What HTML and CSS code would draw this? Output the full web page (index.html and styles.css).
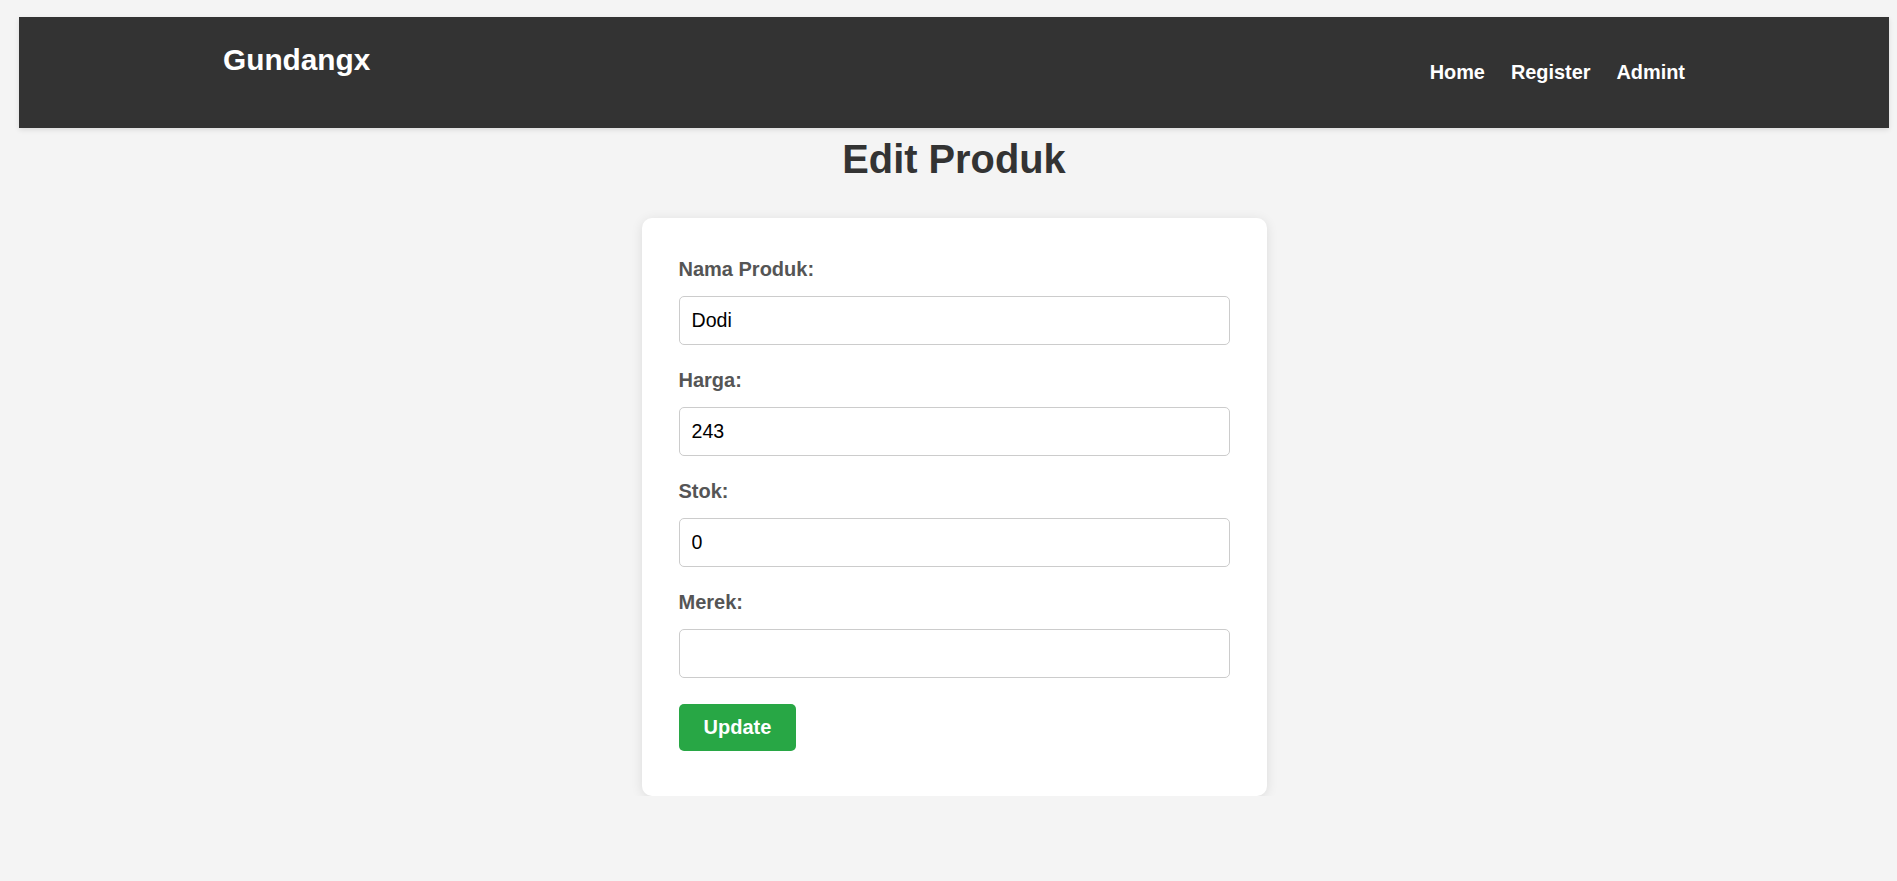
FILE: index.html
```html
<!DOCTYPE html>
<html lang="id">
<head>
<meta charset="utf-8">
<title>Edit Produk</title>
<link rel="stylesheet" href="styles.css">
</head>
<body>
<div class="page">
  <header class="site-header">
    <div class="brand">Gundangx</div>
    <nav class="nav">
      <a href="#" class="nav-link">Home</a>
      <a href="#" class="nav-link">Register</a>
      <a href="#" class="nav-link">Admint</a>
    </nav>
  </header>
  <h1 class="title">Edit Produk</h1>
  <form class="card">
    <label class="label">Nama Produk:</label>
    <input class="input" type="text" value="Dodi">
    <label class="label">Harga:</label>
    <input class="input" type="text" value="243">
    <label class="label">Stok:</label>
    <input class="input" type="text" value="0">
    <label class="label">Merek:</label>
    <input class="input" type="text" value="">
    <button class="btn" type="button">Update</button>
  </form>
</div>
</body>
</html>
```
FILE: styles.css
```css
* { box-sizing: border-box; }
html, body {
  margin: 0;
  padding: 0;
  background: #f4f4f4;
  font-family: "Liberation Sans", Arial, sans-serif;
}
.page {
  padding: 17px 8px 0 19px;
  display: flex;
  flex-direction: column;
  align-items: center;
}
.site-header {
  align-self: stretch;
  height: 111px;
  background: #333333;
  box-shadow: 0 2px 5px rgba(0,0,0,0.1);
  display: flex;
  justify-content: space-between;
  align-items: center;
  padding: 0 204px;
}
.brand {
  align-self: flex-start;
  margin-top: 26px;
  color: #ffffff;
  font-weight: bold;
  font-size: 29.8px;
  line-height: 1.15;
}
.nav {
  display: flex;
  gap: 26px;
}
.nav-link {
  color: #ffffff;
  text-decoration: none;
  font-weight: bold;
  font-size: 19.9px;
  line-height: 1.15;
}
.title {
  margin: 9px 0 0;
  color: #333333;
  font-size: 39.8px;
  font-weight: bold;
  line-height: 1.15;
}
.card {
  margin-top: 35px;
  width: 625px;
  background: #ffffff;
  border-radius: 10px;
  box-shadow: 0 2px 12px rgba(0,0,0,0.1);
  padding: 40px 37px 45px;
  display: flex;
  flex-direction: column;
  align-items: flex-start;
}
.label {
  display: block;
  color: #555555;
  font-weight: bold;
  font-size: 20px;
  line-height: 23px;
  margin-bottom: 15px;
}
.input {
  display: block;
  width: 100%;
  height: 49px;
  margin: 0 0 24px;
  padding: 0 12px;
  border: 1px solid #cccccc;
  border-radius: 5px;
  font-family: "Liberation Sans", Arial, sans-serif;
  font-size: 19.6px;
  color: #000000;
  background: #ffffff;
}
.input:last-of-type { margin-bottom: 26px; }
.btn {
  height: 47px;
  padding: 0 25px;
  background: #28a745;
  color: #ffffff;
  border: none;
  border-radius: 5px;
  font-family: "Liberation Sans", Arial, sans-serif;
  font-weight: bold;
  font-size: 20px;
}
```
